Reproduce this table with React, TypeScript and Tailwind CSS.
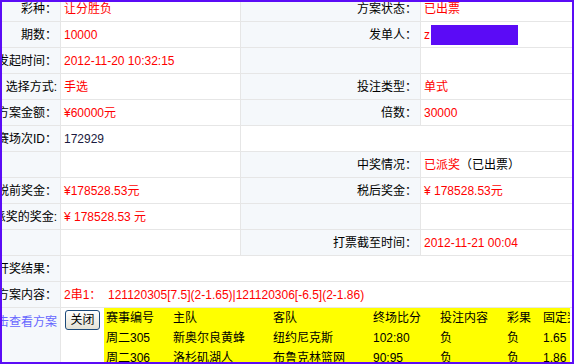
import type { ReactNode } from 'react';

type Cell = { kind: 'label' | 'value'; text?: ReactNode; span?: 2 | 3; last?: boolean };

const red = 'text-[#ff0000]';

const rows: Cell[][] = [
  [
    { kind: 'label', text: '彩种：' },
    { kind: 'value', text: <span className={red}>让分胜负</span> },
    { kind: 'label', text: '方案状态：' },
    { kind: 'value', text: <span className={red}>已出票</span>, last: true },
  ],
  [
    { kind: 'label', text: '期数：' },
    { kind: 'value', text: <span className={red}>10000</span> },
    { kind: 'label', text: '发单人：' },
    {
      kind: 'value',
      last: true,
      text: (
        <span className="flex items-center">
          <span className={red}>z</span>
          <span className="ml-[1px] h-[20px] w-[87px] bg-[#5b0bf6]" />
        </span>
      ),
    },
  ],
  [
    { kind: 'label', text: '发起时间：' },
    { kind: 'value', text: <span className={red}>2012-11-20 10:32:15</span> },
    { kind: 'label' },
    { kind: 'value', last: true },
  ],
  [
    { kind: 'label', text: '选择方式:' },
    { kind: 'value', text: <span className={red}>手选</span> },
    { kind: 'label', text: '投注类型：' },
    { kind: 'value', text: <span className={red}>单式</span>, last: true },
  ],
  [
    { kind: 'label', text: '方案金额：' },
    { kind: 'value', text: <span className={red}>¥60000元</span> },
    { kind: 'label', text: '倍数：' },
    { kind: 'value', text: <span className={red}>30000</span>, last: true },
  ],
  [
    { kind: 'label', text: '比赛场次ID：' },
    { kind: 'value', text: <span className="text-[#1a1a40]">172929</span> },
    { kind: 'value', span: 2, last: true },
  ],
  [
    { kind: 'label' },
    { kind: 'value' },
    { kind: 'label', text: '中奖情况：' },
    {
      kind: 'value',
      last: true,
      text: (
        <span>
          <span className={red}>已派奖</span>（已出票）
        </span>
      ),
    },
  ],
  [
    { kind: 'label', text: '税前奖金：' },
    { kind: 'value', text: <span className={red}>¥178528.53元</span> },
    { kind: 'label', text: '税后奖金：' },
    { kind: 'value', text: <span className={red}>¥ 178528.53元</span>, last: true },
  ],
  [
    { kind: 'label', text: '派奖的奖金:' },
    { kind: 'value', text: <span className={red}>¥ 178528.53 元</span> },
    { kind: 'label' },
    { kind: 'value', last: true },
  ],
  [
    { kind: 'label' },
    { kind: 'value' },
    { kind: 'label', text: '打票截至时间：' },
    { kind: 'value', text: <span className={red}>2012-11-21 00:04</span>, last: true },
  ],
  [
    { kind: 'label', text: '开奖结果：' },
    { kind: 'value', span: 3, last: true },
  ],
  [
    { kind: 'label', text: '方案内容：' },
    {
      kind: 'value',
      span: 3,
      last: true,
      text: <span className={red}>2串1：&nbsp; 121120305[7.5](2-1.65)|121120306[-6.5](2-1.86)</span>,
    },
  ],
];

const matches = [
  ['赛事编号', '主队', '客队', '终场比分', '投注内容', '彩果', '固定奖金'],
  ['周二305', '新奥尔良黄蜂', '纽约尼克斯', '102:80', '负', '负', '1.65'],
  ['周二306', '洛杉矶湖人', '布鲁克林篮网', '90:95', '负', '负', '1.86'],
];

function TableCell({ cell }: { cell: Cell }) {
  const span = cell.span === 2 ? 'col-span-2' : cell.span === 3 ? 'col-span-3' : '';
  const edge = cell.last ? '' : 'border-r border-[#e6e6e6]';
  if (cell.kind === 'label') {
    return (
      <div className={`flex items-center justify-end overflow-hidden whitespace-nowrap bg-[#f5f8fb] pr-[3px] text-black ${edge} ${span}`}>
        {cell.text}
      </div>
    );
  }
  return (
    <div className={`flex items-center overflow-hidden whitespace-nowrap bg-white pl-[3px] ${edge} ${span}`}>
      {cell.text}
    </div>
  );
}

export default function App() {
  return (
    <div className="h-[364px] w-[574px] overflow-hidden border-2 border-[#5b0cf6] bg-white font-['Liberation_Sans','Noto_Sans_CJK_SC',sans-serif] text-[12px] leading-none">
      <div className="mt-[-6px]">
        {rows.map((row, i) => (
          <div key={i} className="grid h-[26px] grid-cols-[59px_180px_180px_1fr] border-b border-[#e6e6e6]">
            {row.map((cell, j) => (
              <TableCell key={j} cell={cell} />
            ))}
          </div>
        ))}

        {/* last row: link + close button + match table */}
        <div className="grid grid-cols-[59px_1fr]">
          <div className="flex justify-end overflow-hidden whitespace-nowrap border-r border-[#e6e6e6] bg-[#f5f8fb] pr-[3px] pt-[8px] text-[#6666ff]">
            点击查看方案
          </div>
          <div className="flex items-start overflow-hidden bg-white pl-[4px]">
            <button
              type="button"
              className="mt-[2px] flex h-[20px] w-[35px] shrink-0 items-center justify-center rounded-[3px] border border-[#1c4a7a] bg-gradient-to-b from-white to-[#e4e2d6] text-black"
            >
              关闭
            </button>
            <div className="ml-[4px] mr-[2px] flex-1 overflow-hidden bg-[#ffff00] pl-[2px] text-black">
              {matches.map((m, i) => (
                <div key={i} className="grid h-[20px] grid-cols-[67px_100px_100px_67px_67px_36px_1fr] items-center whitespace-nowrap">
                  {m.map((t, j) => (
                    <span key={j}>{t}</span>
                  ))}
                </div>
              ))}
            </div>
          </div>
        </div>
      </div>
    </div>
  );
}
